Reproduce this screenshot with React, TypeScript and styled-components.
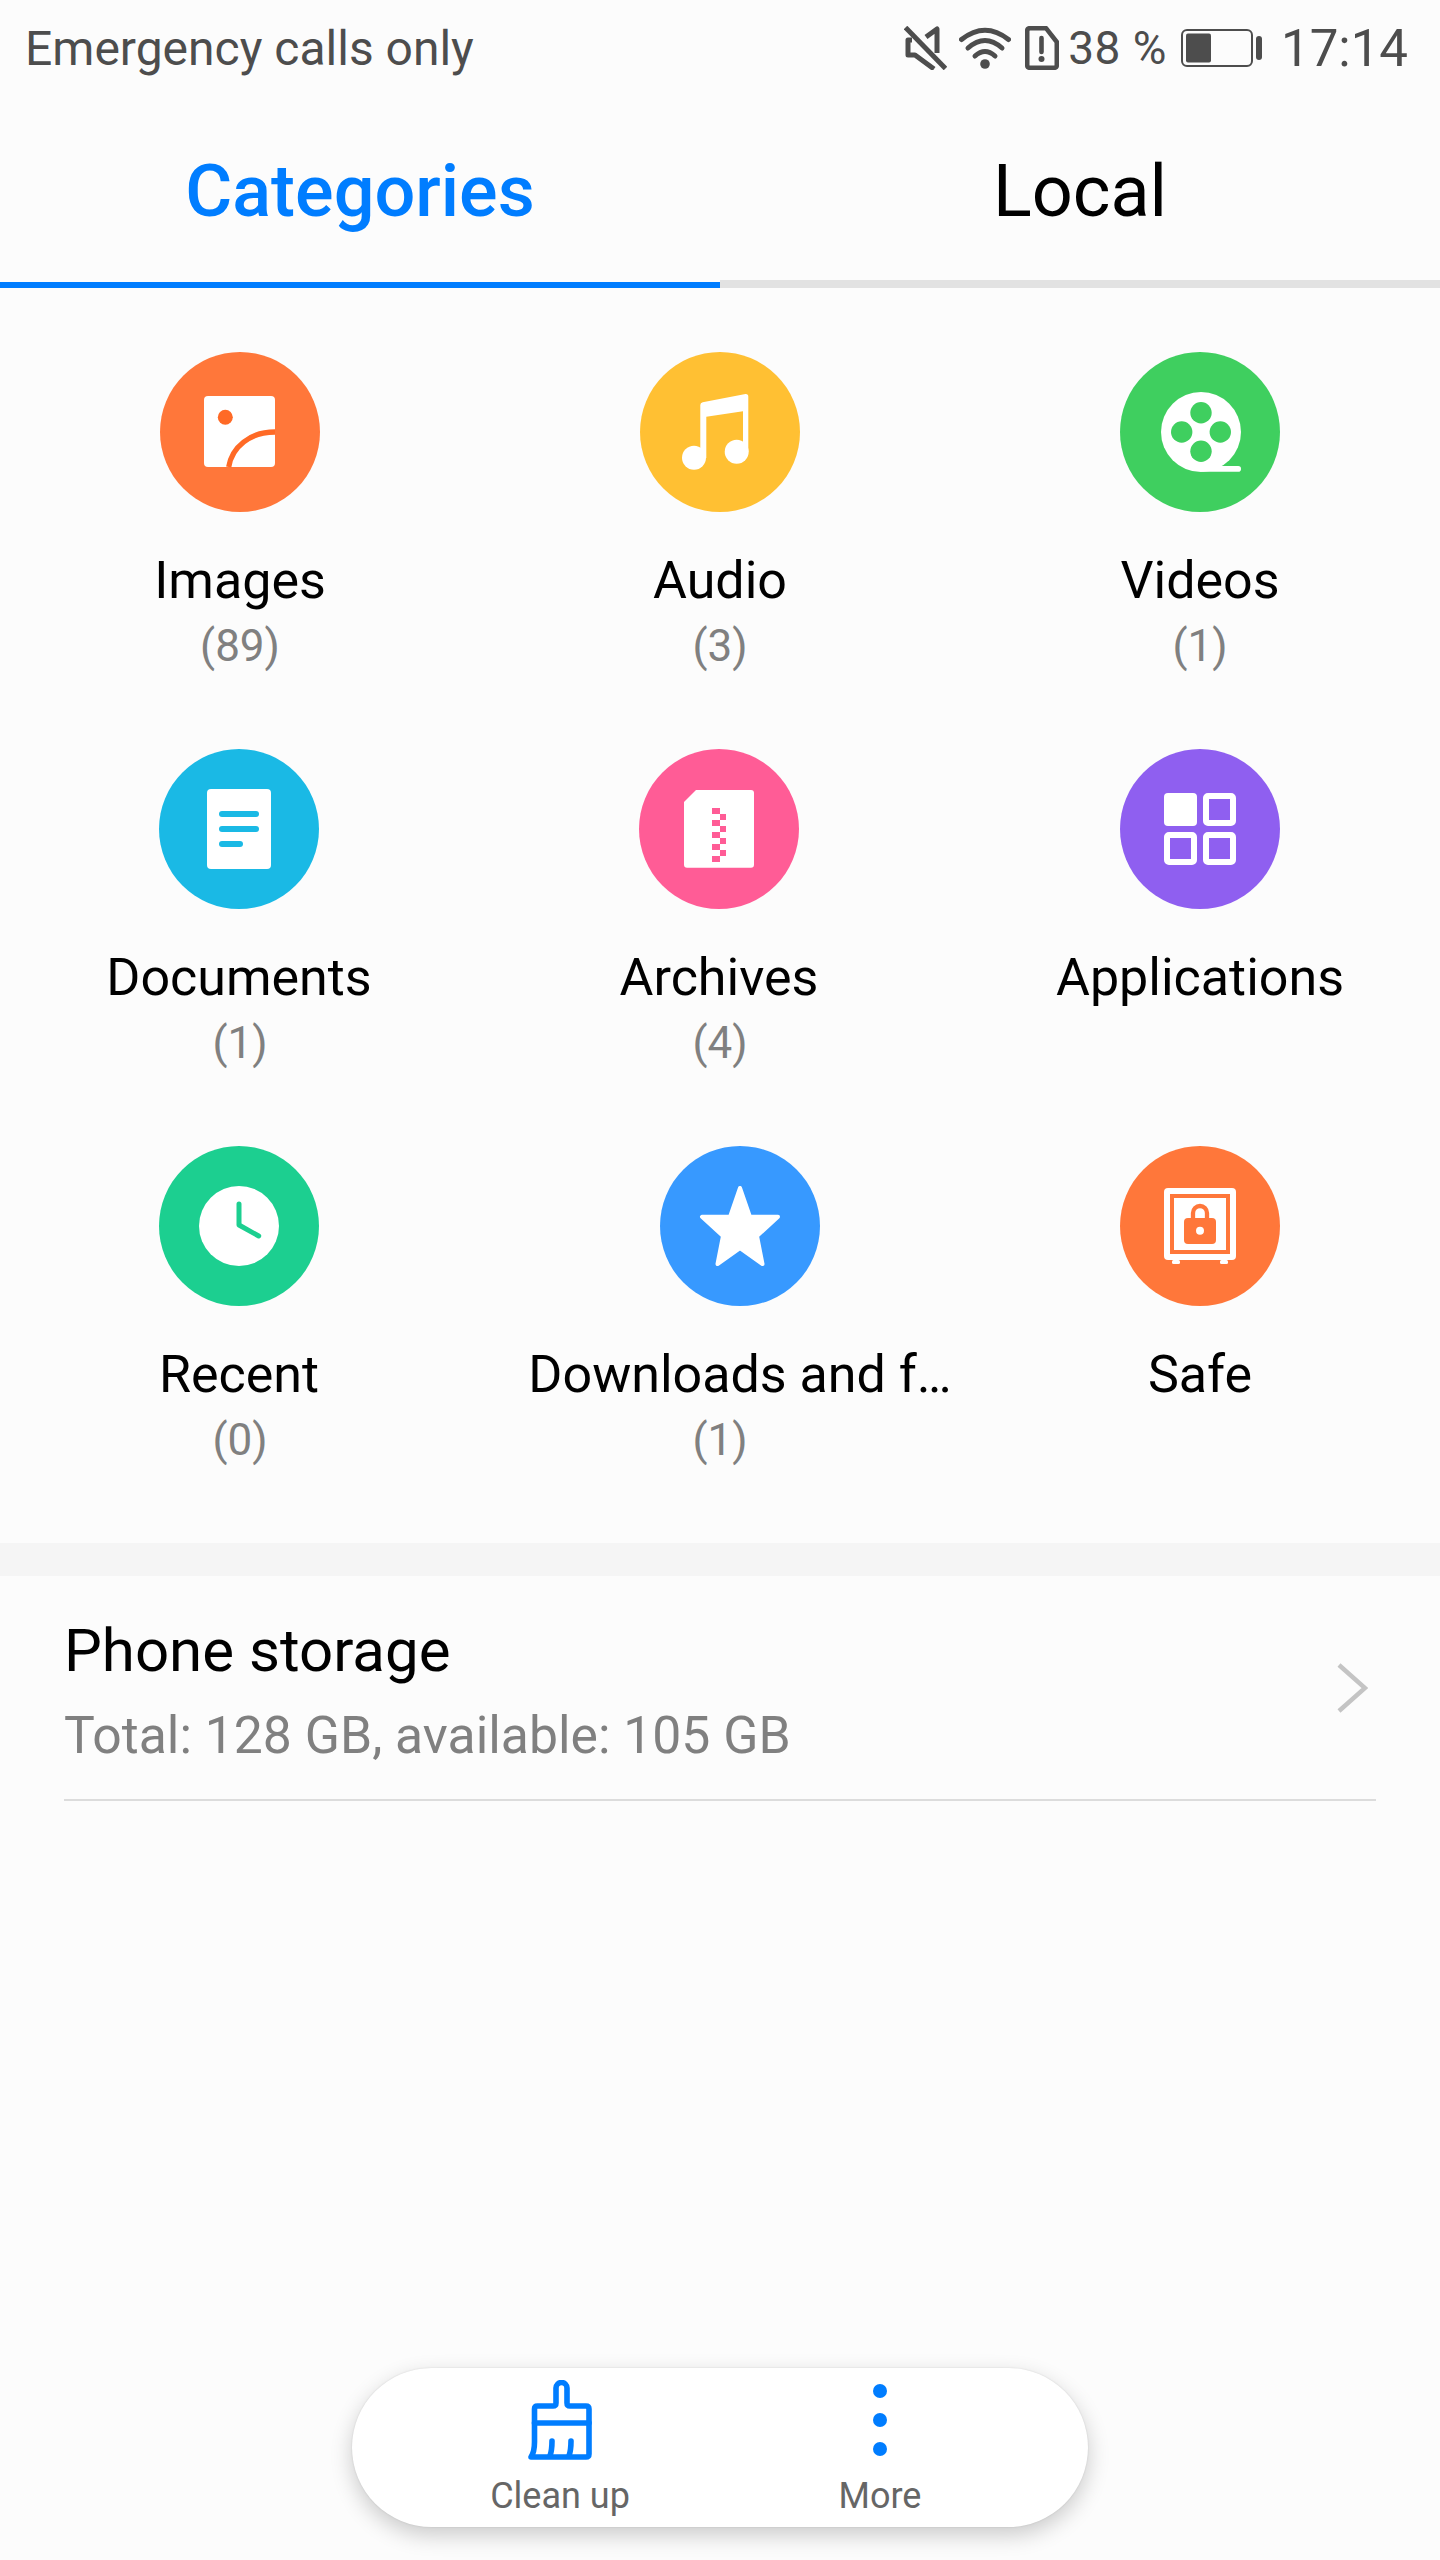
import React from 'react'
import styled, { createGlobalStyle } from 'styled-components'

const BLUE = '#007dff'

const ImagesGlyph = () => (
  <>
    <rect x="44" y="44" width="71" height="71" rx="4" fill="#fff" />
    <circle cx="65.3" cy="65.3" r="7.5" fill="#ff6a26" />
    <path d="M68.7 115C72 95 90 80 115 80" fill="none" stroke="#ff6a26" strokeWidth="5.3" />
  </>
)

const AudioGlyph = () => (
  <>
    <circle cx="54" cy="105.7" r="12" fill="#fff" />
    <circle cx="96.7" cy="99.7" r="12" fill="#fff" />
    <path d="M60.3 106V53q0-2.4 2.4-2.8L105.5 42q2.8-.2 2.8 2.6V100H103V59.2L66.3 64.7V106Z" fill="#fff" />
  </>
)

const VideosGlyph = ({ c }: { c: string }) => (
  <>
    <circle cx="81" cy="80" r="40" fill="#fff" />
    <rect x="81" y="114" width="40" height="5.7" rx="2.8" fill="#fff" />
    <circle cx="81" cy="60.7" r="10.7" fill={c} />
    <circle cx="61.7" cy="80" r="10.7" fill={c} />
    <circle cx="100.3" cy="80" r="10.7" fill={c} />
    <circle cx="81" cy="99.3" r="10.7" fill={c} />
  </>
)

const DocumentsGlyph = ({ c }: { c: string }) => (
  <>
    <rect x="48" y="40" width="64" height="80" rx="4" fill="#fff" />
    <rect x="60" y="62" width="40" height="6" rx="3" fill={c} />
    <rect x="60" y="77" width="40" height="6" rx="3" fill={c} />
    <rect x="60" y="92" width="24" height="6" rx="3" fill={c} />
  </>
)

const ArchivesGlyph = ({ c }: { c: string }) => (
  <>
    <path d="M57 41H112q3 0 3 3V115.7q0 3-3 3H48q-3 0-3-3V53Z" fill="#fff" />
    {[59, 71, 83, 95, 107].map((y) => (
      <rect key={y} x="73" y={y} width="8" height="6" fill={c} />
    ))}
    {[65, 77, 89, 101].map((y) => (
      <rect key={y} x="81" y={y} width="6" height="6" fill={c} />
    ))}
  </>
)

const ApplicationsGlyph = () => (
  <>
    <rect x="44" y="44" width="33" height="33" rx="4" fill="#fff" />
    <rect x="86" y="47" width="27" height="27" rx="2" fill="none" stroke="#fff" strokeWidth="6" />
    <rect x="47" y="86" width="27" height="27" rx="2" fill="none" stroke="#fff" strokeWidth="6" />
    <rect x="86" y="86" width="27" height="27" rx="2" fill="none" stroke="#fff" strokeWidth="6" />
  </>
)

const RecentGlyph = ({ c }: { c: string }) => (
  <>
    <circle cx="80" cy="80" r="40" fill="#fff" />
    <path d="M80 58V79L99.7 90" fill="none" stroke={c} strokeWidth="5" strokeLinecap="round" strokeLinejoin="round" />
  </>
)

const StarGlyph = () => (
  <path
    d="M80 42L90 70.8H118L97 90L102.5 118L80 102L57.5 118L63 90L42 70.8H70Z"
    fill="#fff"
    stroke="#fff"
    strokeWidth="4"
    strokeLinejoin="round"
  />
)

const SafeGlyph = ({ c }: { c: string }) => (
  <>
    <rect x="44" y="42" width="72" height="72" rx="4" fill="#fff" />
    <rect x="52" y="114" width="8" height="4" rx="1.5" fill="#fff" />
    <rect x="100" y="114" width="8" height="4" rx="1.5" fill="#fff" />
    <rect x="52" y="50" width="56" height="56" fill="none" stroke={c} strokeWidth="4" />
    <rect x="64" y="72" width="32" height="26" rx="4" fill={c} />
    <path d="M73 73V67a7 7 0 0 1 14 0V73" fill="none" stroke={c} strokeWidth="4.3" />
    <circle cx="80" cy="84.7" r="4" fill="#fff" />
  </>
)

type Category = {
  name: string
  count?: string
  color: string
  Glyph: React.ComponentType<{ c: string }>
  nudge?: number
}

const categories: Category[] = [
  { name: 'Images', count: '(89)', color: '#ff773a', Glyph: ImagesGlyph },
  { name: 'Audio', count: '(3)', color: '#ffc033', Glyph: AudioGlyph },
  { name: 'Videos', count: '(1)', color: '#3fcf5f', Glyph: VideosGlyph },
  { name: 'Documents', count: '(1)', color: '#1ab9e5', Glyph: DocumentsGlyph, nudge: -2 },
  { name: 'Archives', count: '(4)', color: '#ff5c96', Glyph: ArchivesGlyph, nudge: -2 },
  { name: 'Applications', color: '#8f5ff0', Glyph: ApplicationsGlyph },
  { name: 'Recent', count: '(0)', color: '#1ccf90', Glyph: RecentGlyph, nudge: -2 },
  { name: 'Downloads and f…', count: '(1)', color: '#3799ff', Glyph: StarGlyph, nudge: 40 },
  { name: 'Safe', color: '#ff773a', Glyph: SafeGlyph },
]

const App = () => {
  return (
    <Page>
      <GlobalStyle />
      <StatusBar>
        <span>Emergency calls only</span>
        <StatusRight>
          <svg width="43" height="44" viewBox="0 0 43 44" fill="none" stroke="#4d4d4d" strokeWidth="5">
            <path d="M1.5 1.5L41.5 42.5" />
            <path d="M8 14H4V29H11L30 43" strokeLinejoin="round" />
            <path d="M22 11L33 3V27" strokeLinejoin="round" />
          </svg>
          <svg width="52" height="42" viewBox="0 0 52 42" fill="none" stroke="#4d4d4d" strokeWidth="5" strokeLinecap="round">
            <path d="M2.5 12.5Q26-6 49.5 12.5" />
            <path d="M9 21Q26 6 43 21" />
            <path d="M16 29Q26 20 36 29" />
            <circle cx="26" cy="37" r="4.8" fill="#4d4d4d" stroke="none" />
          </svg>
          <svg width="34" height="44" viewBox="0 0 34 44" fill="none" stroke="#4d4d4d" strokeWidth="4.6">
            <path d="M5 2.2H21L31.8 16V39q0 2.8-2.8 2.8H5Q2.2 41.8 2.2 39V5Q2.2 2.2 5 2.2Z" strokeLinejoin="round" />
            <path d="M16.5 12V26" strokeLinecap="round" />
            <circle cx="16.5" cy="33" r="3" fill="#4d4d4d" stroke="none" />
          </svg>
          <Percent>38 %</Percent>
          <svg width="81" height="38" viewBox="0 0 81 38">
            <rect x="1" y="1" width="70" height="36" rx="5" fill="none" stroke="#4d4d4d" strokeWidth="2" />
            <rect x="5" y="4.5" width="25" height="29" rx="2" fill="#4d4d4d" />
            <rect x="75" y="7" width="6" height="24" rx="3" fill="#4d4d4d" />
          </svg>
          <Clock>17:14</Clock>
        </StatusRight>
      </StatusBar>

      <TabBar>
        <Tab $active>Categories</Tab>
        <Tab>Local</Tab>
      </TabBar>

      <Grid>
        {categories.map(({ name, count, color, Glyph, nudge }) => (
          <Cell key={name}>
            <Primary $nudge={nudge ?? 0}>
              <Circle $color={color}>
                <svg width="160" height="160" viewBox="0 0 160 160">
                  <Glyph c={color} />
                </svg>
              </Circle>
              <Label>{name}</Label>
            </Primary>
            {count && <Count>{count}</Count>}
          </Cell>
        ))}
      </Grid>

      <Band />

      <StorageRow>
        <StorageInner>
          <div>
            <StorageTitle>Phone storage</StorageTitle>
            <StorageSub>Total: 128 GB, available: 105 GB</StorageSub>
          </div>
          <svg width="32" height="50" viewBox="0 0 32 50" fill="none" stroke="#c4c4c4" strokeWidth="4.5">
            <path d="M3 2L29 25L3 48" />
          </svg>
        </StorageInner>
      </StorageRow>

      <BottomPill>
        <PillButton>
          <svg width="64" height="80" viewBox="0 0 64 80" fill="none" stroke={BLUE} strokeWidth="5.6" strokeLinecap="round" strokeLinejoin="round">
            <path d="M6.5 62V29q0-3 3-3H25q3 0 3-3V8a5.5 5.5 0 0 1 11 0V23q0 3 3 3H58q3 0 3 3V74q0 3-3 3H3Q6.5 72 6.5 62Z" />
            <path d="M6.5 43H61" />
            <path d="M24 61q0 9-2 15" />
            <path d="M43 61q0 9-2 15" />
          </svg>
          <PillLabel>Clean up</PillLabel>
        </PillButton>
        <PillButton>
          <svg width="14" height="80" viewBox="0 0 14 80" fill={BLUE}>
            <circle cx="7" cy="11" r="7" />
            <circle cx="7" cy="40" r="7" />
            <circle cx="7" cy="69" r="7" />
          </svg>
          <PillLabel>More</PillLabel>
        </PillButton>
      </BottomPill>
    </Page>
  )
}

export default App

const GlobalStyle = createGlobalStyle`
  html, body {
    margin: 0;
    padding: 0;
    background: #fcfcfc;
  }

  body {
    font-family: Roboto, "Liberation Sans", sans-serif;
  }
`

const Page = styled.div`
  position: relative;
  width: 1440px;
  height: 2560px;
  overflow: hidden;
  background: #fcfcfc;
`

const StatusBar = styled.div`
  display: flex;
  align-items: center;
  justify-content: space-between;
  height: 96px;
  padding: 0 32px 0 25px;
  box-sizing: border-box;
  color: #4d4d4d;
  font-size: 48px;
`

const StatusRight = styled.div`
  display: flex;
  align-items: center;
  height: 44px;

  > svg:nth-child(2) {
    margin-left: 12px;
  }

  > svg:nth-child(3) {
    margin-left: 14px;
  }
`

const Percent = styled.span`
  margin: 0 14px 0 9px;
  font-size: 46px;
  letter-spacing: 0.5px;
`

const Clock = styled.span`
  margin-left: 19px;
  font-size: 51px;
`

const TabBar = styled.div`
  display: flex;
  height: 192px;
`

const Tab = styled.div<{ $active?: boolean }>`
  flex: 1;
  display: flex;
  align-items: center;
  justify-content: center;
  box-sizing: border-box;
  padding-top: ${(p) => (p.$active ? '4px' : '6px')};
  font-size: 72px;
  font-weight: ${(p) => (p.$active ? 500 : 400)};
  color: ${(p) => (p.$active ? BLUE : '#000')};
  border-bottom: ${(p) => (p.$active ? `6px solid ${BLUE}` : '8px solid #e2e2e2')};
`

const Grid = styled.div`
  display: grid;
  grid-template-columns: repeat(3, 480px);
  grid-auto-rows: 397px;
  padding-top: 64px;
`

const Cell = styled.div`
  display: flex;
  flex-direction: column;
  align-items: center;
`

const Primary = styled.div<{ $nudge: number }>`
  display: flex;
  flex-direction: column;
  align-items: center;
  margin-left: ${(p) => p.$nudge}px;
`

const Circle = styled.div<{ $color: string }>`
  width: 160px;
  height: 160px;
  border-radius: 50%;
  background: ${(p) => p.$color};

  > svg {
    display: block;
  }
`

const Label = styled.div`
  margin-top: 36px;
  font-size: 52px;
  line-height: 66px;
  color: #000;
  white-space: nowrap;
`

const Count = styled.div`
  margin-top: -1px;
  font-size: 44px;
  line-height: 66px;
  color: #808080;
`

const Band = styled.div`
  height: 33px;
  background: #f5f5f5;
`

const StorageRow = styled.div`
  padding: 0 64px 0 64px;
`

const StorageInner = styled.div`
  display: flex;
  align-items: center;
  justify-content: space-between;
  height: 225px;
  padding-right: 8px;
  box-sizing: border-box;
  border-bottom: 2px solid #dcdcdc;
`

const StorageTitle = styled.div`
  margin-top: 6px;
  font-size: 60px;
  line-height: 76px;
  color: #000;
`

const StorageSub = styled.div`
  margin-top: 14px;
  font-size: 51.7px;
  line-height: 66px;
  color: #808080;
`

const BottomPill = styled.div`
  position: absolute;
  left: 352px;
  top: 2368px;
  display: flex;
  justify-content: center;
  width: 736px;
  height: 159px;
  border-radius: 80px;
  background: #fff;
  box-shadow: 0 8px 22px rgba(0, 0, 0, 0.2), 0 0 2px rgba(0, 0, 0, 0.12);
`

const PillButton = styled.div`
  display: flex;
  flex-direction: column;
  align-items: center;
  width: 320px;
  padding-top: 12px;

  > svg {
    display: block;
  }
`

const PillLabel = styled.div`
  margin-top: 11px;
  font-size: 36px;
  line-height: 50px;
  color: #666;
`
